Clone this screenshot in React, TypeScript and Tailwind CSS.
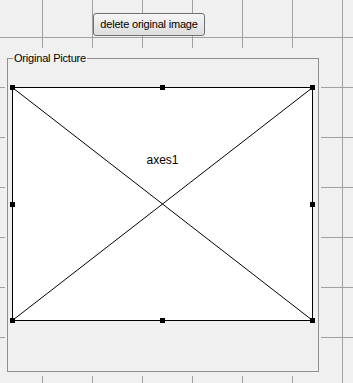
import React from 'react';

// Selection handles drawn around the axes
const handles = [
  'left-[-3px] top-[-3px]',
  'left-[147px] top-[-3px]',
  'right-[-3px] top-[-3px]',
  'left-[-3px] top-[114px]',
  'right-[-3px] top-[114px]',
  'left-[-3px] bottom-[-3px]',
  'left-[147px] bottom-[-3px]',
  'right-[-3px] bottom-[-3px]',
];

const Axes: React.FC = () => (
  <div className="relative ml-[4px] mt-[28px] w-[301px] h-[234px] border border-black bg-white">
    <svg className="absolute inset-0 w-full h-full" preserveAspectRatio="none">
      <line x1="0" y1="0" x2="100%" y2="100%" stroke="#000" strokeWidth="1" />
      <line x1="0" y1="100%" x2="100%" y2="0" stroke="#000" strokeWidth="1" />
    </svg>
    <div className="relative flex justify-center pt-[65px] text-[12px] leading-[14px] text-black">
      axes1
    </div>
    {handles.map((pos) => (
      <span key={pos} className={`absolute w-[5px] h-[5px] bg-black ${pos}`} />
    ))}
  </div>
);

export default function App() {
  return (
    <div
      className="w-[353px] h-[383px] overflow-hidden flex flex-col items-start bg-[#f0f0f0] bg-[linear-gradient(to_right,#a0a0a0_1px,transparent_1px),linear-gradient(to_bottom,#a0a0a0_1px,transparent_1px)] bg-size-[50px_50px] bg-position-[42px_37px]"
      style={{ fontFamily: '"Liberation Sans", Arial, sans-serif' }}
    >
      <button className="ml-[93px] mt-[13px] w-[112px] h-[23px] rounded-[3px] border border-[#707070] bg-[linear-gradient(to_bottom,#f6f6f6,#dddddd)] text-[11px] tracking-[-0.2px] text-black leading-none">
        delete original image
      </button>

      <div className="ml-[5px] mt-[12px] w-[316px] h-[328px] bg-[#f0f0f0] pt-[10px] px-[2px] pb-[4px]">
        <div className="relative w-[312px] h-[314px] border border-[#909090]">
          <span className="absolute left-[5px] top-[-8px] bg-[#f0f0f0] px-[1px] text-[11px] leading-[14px] tracking-[-0.2px] text-black">
            Original Picture
          </span>
          <Axes />
        </div>
      </div>
    </div>
  );
}
